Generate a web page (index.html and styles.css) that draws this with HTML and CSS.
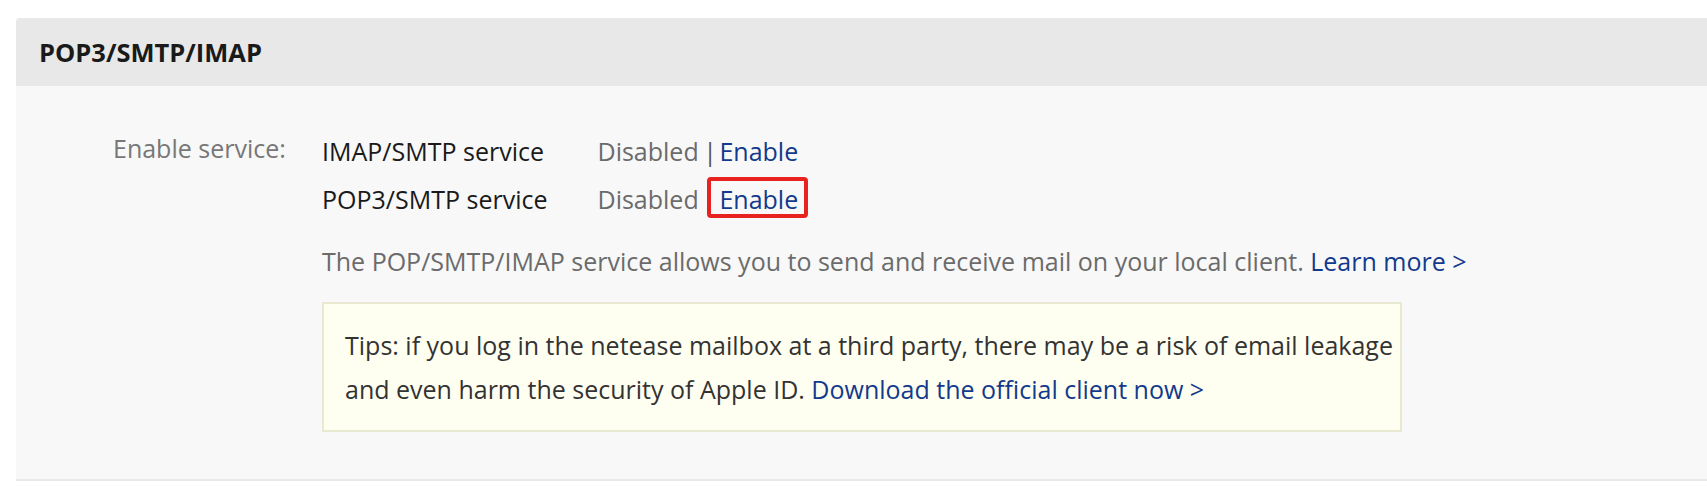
FILE: index.html
```html
<!DOCTYPE html>
<html lang="en">
  <head>
    <meta charset="UTF-8" />
    <meta name="viewport" content="width=device-width, initial-scale=1.0" />
    <title>POP3/SMTP/IMAP</title>
    <link rel="stylesheet" href="styles.css">
  </head>
  <body>
    <div class="panel">
      <div class="panel-header">
        <h2>POP3/SMTP/IMAP</h2>
      </div>
      <div class="panel-body">
        <div class="field">
          <div class="field-label">Enable service:</div>
          <div class="field-content">
            <div class="service-row">
              <span class="service-name">IMAP/SMTP service</span>
              <span class="status">Disabled</span>
              <span class="sep">|</span>
              <a href="#" class="link">Enable</a>
            </div>
            <div class="service-row">
              <span class="service-name">POP3/SMTP service</span>
              <span class="status">Disabled</span>
              <span class="sep covered">|</span>
              <a href="#" class="link marked">Enable</a>
            </div>
            <p class="desc">
              The POP/SMTP/IMAP service allows you to send and receive mail on your local client.
              <a href="#" class="link">Learn more &gt;</a>
            </p>
            <div class="tips">
              Tips: if you log in the netease mailbox at a third party, there may be a risk of email leakage<br>
              and even harm the security of Apple ID.
              <a href="#" class="link">Download the official client now &gt;</a>
            </div>
          </div>
        </div>
      </div>
    </div>
  </body>
</html>
```

FILE: styles.css
```css
/* General reset */
* {
  margin: 0;
  padding: 0;
  box-sizing: border-box;
}

body {
  background: #ffffff;
  font-family: "Open Sans", "Noto Sans", Arial, sans-serif;
  font-size: 25px;
  color: #222;
  padding: 18px 0 0 16px;
}

/* Panel */
.panel {
  background: #f8f8f8;
  border-bottom: 2px solid #e8e8e8;
  border-radius: 4px 0 0 0;
}

.panel-header {
  background: #e8e8e8;
  height: 68px;
  padding-left: 23px;
  display: flex;
  align-items: center;
  border-radius: 4px 0 0 0;
}

.panel-header h2 {
  font-size: 25.5px;
  font-weight: bold;
  color: #1a1a1a;
}

.panel-body {
  padding: 41px 0 47px 0;
}

/* Label + content row */
.field {
  display: flex;
}

.field-label {
  width: 306px;
  padding-left: 97px;
  color: #777;
  line-height: 42px;
}

.field-content {
  flex: 1;
}

.service-row {
  height: 48px;
  line-height: 48px;
}

.service-name {
  display: inline-block;
  width: 269px;
  color: #1a1a1a;
}

.status {
  color: #6b6b6b;
}

.sep {
  color: #555;
  margin: 0 -4px 0 -2px;
}

.sep.covered {
  visibility: hidden;
}

.link {
  color: #123a8c;
  text-decoration: none;
}

/* Red annotation box round the second Enable */
.marked {
  display: inline-block;
  position: relative;
}

.marked::after {
  content: "";
  position: absolute;
  left: -12px;
  right: -10px;
  top: 2px;
  bottom: 5px;
  border: 4px solid #e8231f;
  border-radius: 4px;
}

.desc {
  color: #6b6b6b;
  line-height: 48px;
  margin-top: 14px;
}

/* Tips box */
.tips {
  width: 1080px;
  margin-top: 17px;
  padding: 19px 2px 19px 21px;
  background: #fffff1;
  border: 2px solid #e9e9d2;
  color: #333;
  line-height: 44px;
  white-space: nowrap;
}
```
